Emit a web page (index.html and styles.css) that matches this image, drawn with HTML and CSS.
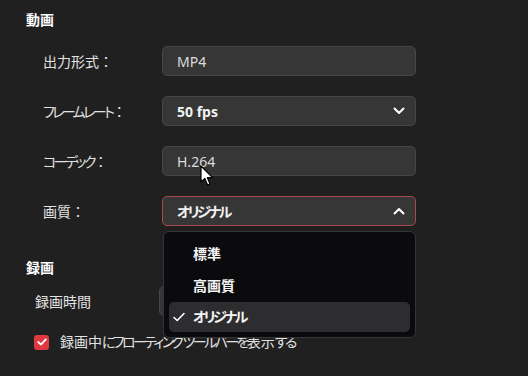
FILE: index.html
```html
<!DOCTYPE html>
<html lang="ja">
<head>
  <meta charset="UTF-8" />
  <title>設定</title>
  <link rel="stylesheet" href="styles.css">
</head>
<body>
  <div class="panel">
    <div class="section-title">動画</div>

    <div class="row">
      <div class="label">出力形式<span class="colon">：</span></div>
      <div class="field">MP4</div>
    </div>

    <div class="row">
      <div class="label"><span class="kana">フレームレート</span><span class="colon">：</span></div>
      <div class="field select">
        <span>50 fps</span>
        <svg class="chev" width="12" height="8" viewBox="0 0 12 8"><path d="M1.5 1.5 L6 6 L10.5 1.5" fill="none" stroke="#fff" stroke-width="2" stroke-linecap="round" stroke-linejoin="round"/></svg>
      </div>
    </div>

    <div class="row">
      <div class="label"><span class="kana">コーデック</span><span class="colon">：</span></div>
      <div class="field">H.264</div>
    </div>

    <div class="row">
      <div class="label">画質<span class="colon">：</span></div>
      <div class="select-wrap">
        <div class="field select open">
          <span class="kana">オリジナル</span>
          <svg class="chev" width="12" height="8" viewBox="0 0 12 8"><path d="M1.5 6.5 L6 2 L10.5 6.5" fill="none" stroke="#fff" stroke-width="2" stroke-linecap="round" stroke-linejoin="round"/></svg>
        </div>
        <div class="menu">
          <div class="item">標準</div>
          <div class="item">高画質</div>
          <div class="item selected">
            <svg class="check" width="12" height="10" viewBox="0 0 12 10"><path d="M1 5.5 L4.2 8.5 L11 1.5" fill="none" stroke="#fff" stroke-width="1.6" stroke-linecap="round" stroke-linejoin="round"/></svg>
            <span class="kana">オリジナル</span>
          </div>
        </div>
      </div>
    </div>

    <div class="section-title rec">録画</div>

    <div class="row rec-row">
      <div class="label">録画時間</div>
      <div class="field hidden-field"></div>
    </div>

    <div class="check-row">
      <span class="checkbox">
        <svg width="10" height="8" viewBox="0 0 10 8"><path d="M1.2 4 L4 6.6 L8.8 1.4" fill="none" stroke="#fff" stroke-width="1.8" stroke-linecap="round" stroke-linejoin="round"/></svg>
      </span>
      <span class="check-text">録画中<span class="kana">にフローティング ツールバーを</span>表示<span class="kana">する</span></span>
    </div>
  </div>

  <svg class="cursor" width="14" height="22" viewBox="0 0 14 22">
    <path d="M1 1 L1 17 L4.8 13.4 L7.6 20 L10 19 L7.3 12.6 L12.5 12.6 Z" fill="#fff" stroke="#000" stroke-width="1.2" stroke-linejoin="round"/>
  </svg>
</body>
</html>
```

FILE: styles.css
```css
body {
  margin: 0;
  background-color: #202020;
  color: #e6e6e6;
  font-family: 'Noto Sans', 'Noto Sans CJK JP', sans-serif;
  font-size: 14px;
  font-feature-settings: "palt";
  width: 528px;
  height: 376px;
  overflow: hidden;
  position: relative;
}

.panel {
  padding: 10px 0 0 26px;
}

.kana {
  letter-spacing: -2.6px;
}

.colon {
  font-feature-settings: normal;
}

.section-title {
  font-weight: bold;
  color: #fff;
  line-height: 20px;
  margin-bottom: 16px;
}

.section-title.rec {
  margin-top: 32px;
  margin-bottom: 8px;
}

.row {
  display: flex;
  align-items: center;
  height: 30px;
  margin-bottom: 20px;
}

.label {
  width: 136px;
  padding-left: 17px;
  box-sizing: border-box;
  color: #e2e2e2;
  font-size: 14px;
}

.field {
  width: 254px;
  height: 30px;
  box-sizing: border-box;
  background-color: #363636;
  border: 1px solid #464646;
  border-radius: 5px;
  padding: 0 14px;
  display: flex;
  align-items: center;
  color: #dcdcdc;
}

.select {
  justify-content: space-between;
  font-weight: bold;
  color: #f2f2f2;
  padding-right: 10px;
}

.select.open {
  border-color: #a8494b;
}

.select-wrap {
  position: relative;
}

.menu {
  position: absolute;
  top: 35px;
  left: 1px;
  width: 253px;
  box-sizing: border-box;
  background-color: #0b0b0d;
  border: 1px solid #353538;
  border-radius: 6px;
  padding: 6px 5px 5px 5px;
  z-index: 2;
}

.item {
  height: 32px;
  line-height: 32px;
  padding-left: 24px;
  font-weight: bold;
  color: #f4f4f4;
  border-radius: 5px;
  position: relative;
}

.item.selected {
  background-color: #2d2d30;
  height: 30px;
  line-height: 30px;
}

.check {
  position: absolute;
  left: 4px;
  top: 10px;
}

.rec-row {
  margin-bottom: 16px;
}

.rec-row .label {
  padding-left: 9px;
}

.hidden-field {
  margin-left: -3px;
  width: 60px;
}

.check-row {
  display: flex;
  align-items: center;
  padding-left: 8px;
  line-height: 20px;
}

.checkbox {
  width: 15px;
  height: 15px;
  border-radius: 3px;
  background-color: #e0383f;
  display: flex;
  align-items: center;
  justify-content: center;
  margin-right: 11px;
}

.check-text {
  color: #e2e2e2;
  font-size: 14px;
}

.cursor {
  position: absolute;
  left: 200px;
  top: 165px;
  z-index: 3;
}
```
